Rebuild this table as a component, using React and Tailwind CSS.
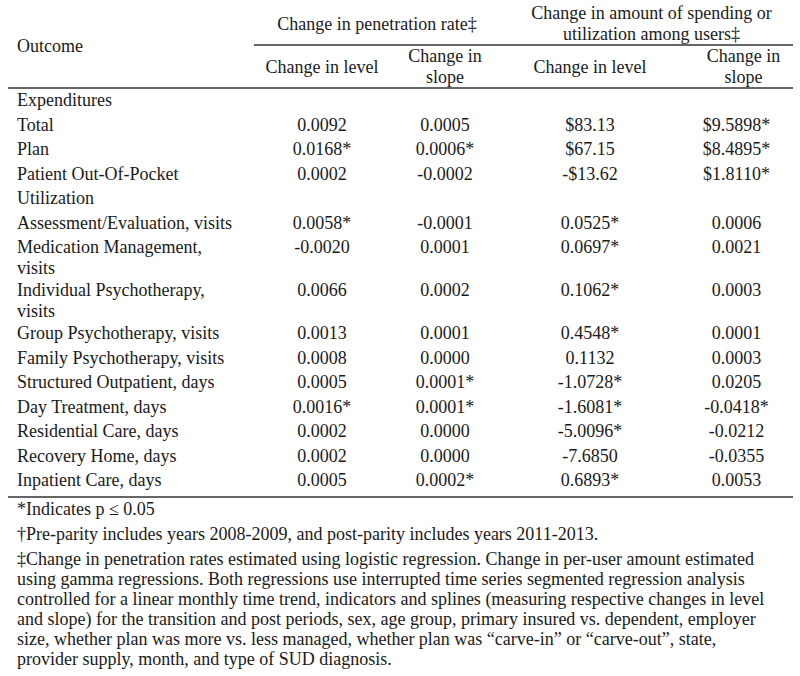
import React from 'react';

const rows = [
    { label: 'Expenditures', section: true },
    { label: 'Total', v: ['0.0092', '0.0005', '$83.13', '$9.5898*'] },
    { label: 'Plan', v: ['0.0168*', '0.0006*', '$67.15', '$8.4895*'] },
    { label: 'Patient Out-Of-Pocket', v: ['0.0002', '-0.0002', '-$13.62', '$1.8110*'] },
    { label: 'Utilization', section: true },
    { label: 'Assessment/Evaluation, visits', v: ['0.0058*', '-0.0001', '0.0525*', '0.0006'] },
    { label: 'Medication Management,', label2: 'visits', v: ['-0.0020', '0.0001', '0.0697*', '0.0021'] },
    { label: 'Individual Psychotherapy,', label2: 'visits', v: ['0.0066', '0.0002', '0.1062*', '0.0003'] },
    { label: 'Group Psychotherapy, visits', v: ['0.0013', '0.0001', '0.4548*', '0.0001'] },
    { label: 'Family Psychotherapy, visits', v: ['0.0008', '0.0000', '0.1132', '0.0003'] },
    { label: 'Structured Outpatient, days', v: ['0.0005', '0.0001*', '-1.0728*', '0.0205'] },
    { label: 'Day Treatment, days', v: ['0.0016*', '0.0001*', '-1.6081*', '-0.0418*'] },
    { label: 'Residential Care, days', v: ['0.0002', '0.0000', '-5.0096*', '-0.0212'] },
    { label: 'Recovery Home, days', v: ['0.0002', '0.0000', '-7.6850', '-0.0355'] },
    { label: 'Inpatient Care, days', v: ['0.0005', '0.0002*', '0.6893*', '0.0053'] },
];

const notes = [
    '‡Change in penetration rates estimated using logistic regression. Change in per-user amount estimated',
    'using gamma regressions. Both regressions use interrupted time series segmented regression analysis',
    'controlled for a linear monthly time trend, indicators and splines (measuring respective changes in level',
    'and slope) for the transition and post periods, sex, age group, primary insured vs. dependent, employer',
    'size, whether plan was more vs. less managed, whether plan was “carve-in” or “carve-out”, state,',
    'provider supply, month, and type of SUD diagnosis.',
];

const cols = 'grid grid-cols-[246px_136px_110px_180px_113px]';

export default function App() {
    return (
        <div className="w-[800px] h-[676px] bg-white text-[#1a1a1a] font-['Liberation_Serif'] text-[18px] overflow-hidden">
            <div className="ml-2 w-[785px]">
                {/* Header */}
                <div className={`${cols} border-b-2 border-[#666]`}>
                    <div className="row-span-2 flex items-center pl-[9px] pt-[6px]">Outcome</div>
                    <div className="col-span-2 h-[46px] flex items-start justify-center border-b-2 border-[#666] leading-[21px] pt-[14px]">
                        Change in penetration rate‡
                    </div>
                    <div className="col-span-2 h-[46px] flex items-start justify-center text-center border-b-2 border-[#666] leading-[21px] pt-[3px] pl-[10px]">
                        Change in amount of spending or<br />utilization among users‡
                    </div>
                    <div className="h-[41px] flex items-center justify-center leading-[21px] pt-[1px]">Change in level</div>
                    <div className="h-[41px] flex items-center justify-center text-center leading-[21px] pt-[1px]">Change in<br />slope</div>
                    <div className="h-[41px] flex items-center justify-center leading-[21px] pt-[1px]">Change in level</div>
                    <div className="h-[41px] flex items-center justify-center text-center leading-[21px] pt-[1px] pl-[14px]">Change in<br />slope</div>
                </div>

                {/* Body */}
                <div className="border-b-2 border-[#666] pb-[2px]">
                    {rows.map((r) => (
                        <div key={r.label} className={`${cols} ${r.label2 ? 'h-[43px]' : 'h-[24.5px]'} leading-[21px] pt-[1px]`}>
                            <div className="pl-[9px] whitespace-nowrap">
                                {r.label}
                                {r.label2 && <><br />{r.label2}</>}
                            </div>
                            {r.section ? null : (
                                <>
                                    <div className="text-center">{r.v[0]}</div>
                                    <div className="text-center">{r.v[1]}</div>
                                    <div className="text-center">{r.v[2]}</div>
                                    <div className="text-center">{r.v[3]}</div>
                                </>
                            )}
                        </div>
                    ))}
                </div>

                {/* Notes */}
                <div className="pl-[9px] pt-[1px] leading-[20px] flex flex-col gap-[5px] whitespace-nowrap">
                    <p>*Indicates p ≤ 0.05</p>
                    <p>†Pre-parity includes years 2008-2009, and post-parity includes years 2011-2013.</p>
                    <p>
                        {notes.map((line) => (
                            <span key={line} className="block">{line}</span>
                        ))}
                    </p>
                </div>
            </div>
        </div>
    );
}
